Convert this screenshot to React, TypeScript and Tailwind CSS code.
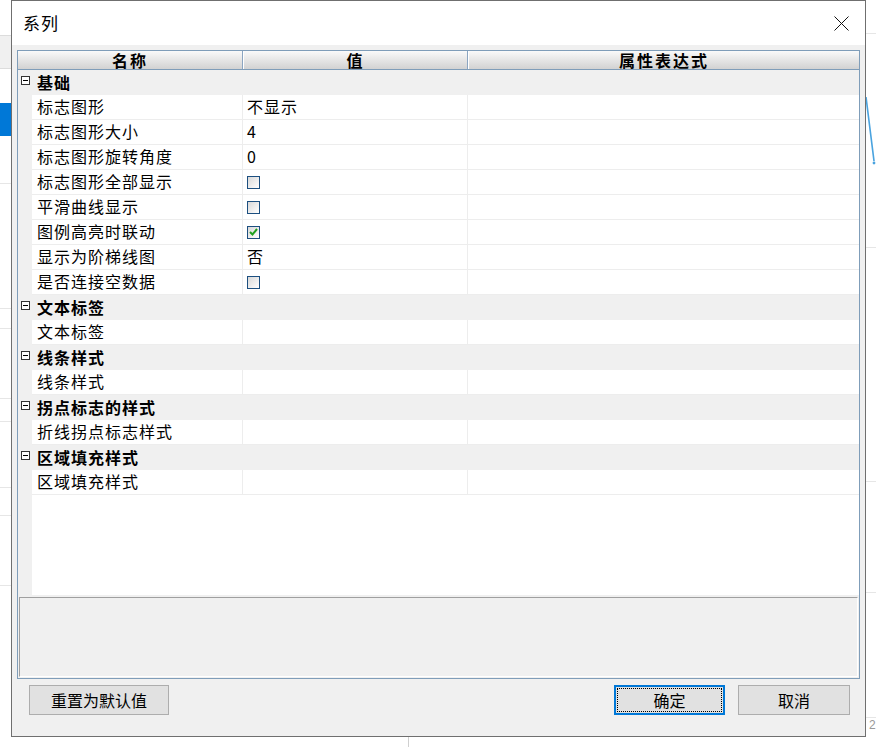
import React from "react";

type Item = { name: string; value?: string; check?: boolean };
type Group = { title: string; items: Item[] };

const groups: Group[] = [
  {
    title: "基础",
    items: [
      { name: "标志图形", value: "不显示" },
      { name: "标志图形大小", value: "4" },
      { name: "标志图形旋转角度", value: "0" },
      { name: "标志图形全部显示", check: false },
      { name: "平滑曲线显示", check: false },
      { name: "图例高亮时联动", check: true },
      { name: "显示为阶梯线图", value: "否" },
      { name: "是否连接空数据", check: false },
    ],
  },
  { title: "文本标签", items: [{ name: "文本标签" }] },
  { title: "线条样式", items: [{ name: "线条样式" }] },
  { title: "拐点标志的样式", items: [{ name: "折线拐点标志样式" }] },
  { title: "区域填充样式", items: [{ name: "区域填充样式" }] },
];

const font = "font-['Noto_Sans_CJK_SC','Noto_Sans',sans-serif]";

const Collapse = () => (
  <svg width="9" height="9" viewBox="0 0 9 9" className="shrink-0">
    <rect x="0.5" y="0.5" width="8" height="8" fill="#fff" stroke="#333" />
    <line x1="2" y1="4.5" x2="7" y2="4.5" stroke="#000" />
  </svg>
);

const CheckBox = ({ checked }: { checked: boolean }) => (
  <div className="w-[13px] h-[13px] border border-[#1c4f80] bg-linear-to-br from-[#d8d8d8] to-white flex items-center justify-center">
    {checked && (
      <svg width="9" height="8" viewBox="0 0 9 8">
        <path d="M1 4 L3.5 6.5 L8 1" fill="none" stroke="#1fa01f" strokeWidth="2" />
      </svg>
    )}
  </div>
);

const HLine = ({ c = "bg-[#dcdcdc]" }: { c?: string }) => <div className={`h-px shrink-0 ${c}`} />;

const LeftStrip = () => (
  <div className="w-[11px] flex flex-col shrink-0">
    <div className="h-[35px]" />
    <HLine />
    <div className="h-[32px] bg-[#f0f0f0]" />
    <HLine />
    <div className="h-[34px]" />
    <div className="h-[33px] bg-[#0078d7]" />
    <div className="h-[47px]" />
    <HLine c="bg-[#e6e6e6]" />
    <div className="h-[124px]" />
    <HLine c="bg-[#e6e6e6]" />
    <div className="h-[19px]" />
    <HLine c="bg-[#e6e6e6]" />
    <div className="h-[69px]" />
    <HLine c="bg-[#e6e6e6]" />
    <div className="h-[22px]" />
    <HLine c="bg-[#e6e6e6]" />
    <div className="h-[65px]" />
    <HLine c="bg-[#e6e6e6]" />
    <div className="h-[27px]" />
    <HLine c="bg-[#e6e6e6]" />
    <div className="h-[69px]" />
    <HLine c="bg-[#e6e6e6]" />
  </div>
);

const RightStrip = () => (
  <div className="flex-1 flex flex-col">
    <div className="h-[33px]" />
    <HLine c="bg-[#e6e6e6]" />
    <div className="h-[63px]" />
    <svg width="10" height="72" viewBox="0 0 10 72" className="shrink-0">
      <path d="M0 0 L8 64" stroke="#4aa3df" strokeWidth="1.6" fill="none" />
      <circle cx="8" cy="66" r="1.4" fill="#4aa3df" />
    </svg>
    <div className="h-[78px]" />
    <HLine c="bg-[#e6e6e6]" />
    <div className="h-[233px]" />
    <HLine c="bg-[#e6e6e6]" />
    <div className="h-[110px]" />
    <HLine c="bg-[#e6e6e6]" />
    <div className="h-[124px]" />
    <HLine c="bg-[#e6e6e6]" />
    <div className="text-[12px] leading-[14px] text-[#999] pl-[3px] font-['Liberation_Sans',sans-serif]">2</div>
  </div>
);

const DataRow = ({ item }: { item: Item }) => (
  <div className="flex h-[25px]">
    <div className="w-[14px] bg-[#f0f0f0] shrink-0" />
    <div className="flex flex-1 border-b border-[#ededed] bg-white">
      <div className="w-[211px] shrink-0 border-r border-[#ededed] pl-[5px] pb-[2px] flex items-center tracking-[1px] text-[16px] leading-[22px] whitespace-nowrap">
        {item.name}
      </div>
      <div className="w-[225px] shrink-0 border-r border-[#ededed] pl-[4px] flex items-center tracking-[1px] text-[16px] leading-[22px]">
        {item.check !== undefined ? (
          <CheckBox checked={item.check} />
        ) : (
          <span className="pb-[2px]">{item.value}</span>
        )}
      </div>
      <div className="flex-1" />
    </div>
  </div>
);

const GroupRow = ({ title }: { title: string }) => (
  <div className="flex h-[25px] bg-[#f0f0f0] items-center">
    <div className="w-[14px] flex justify-center -mt-[4px]">
      <Collapse />
    </div>
    <div className="pl-[5px] pb-[2px] font-bold tracking-[1px] text-[16px] leading-[22px]">{title}</div>
  </div>
);

export default function App() {
  return (
    <div className={`w-[876px] h-[747px] bg-white flex flex-col overflow-hidden text-black ${font}`}>
      <div className="flex h-[737px]">
        <LeftStrip />
        <div className="w-[855px] h-[737px] border border-[#6f6f6f] flex flex-col shrink-0">
          <div className="h-[44px] bg-white flex items-center justify-between pl-[11px] pr-[16px]">
            <span className="text-[17px] tracking-[1px]">系列</span>
            <svg width="15" height="15" viewBox="0 0 15 15">
              <path d="M0.5 0.5 L14.5 14.5 M14.5 0.5 L0.5 14.5" stroke="#111" strokeWidth="1" />
            </svg>
          </div>
          <div className="flex-1 bg-[#f0f0f0] flex flex-col px-[5px] pt-[5px]">
            <div className="h-[629px] border border-[#7f9db9] flex flex-col">
              <div className="flex h-[19px] border-b border-[#7f9db9] bg-linear-to-b from-[#fafafa] to-[#d2d2d2]">
                <div className="w-[225px] border-r border-[#8ba5c1] text-center font-bold text-[16px] leading-[18px] tracking-[2px]">
                  名称
                </div>
                <div className="w-[225px] border-r border-[#8ba5c1] border-l border-l-white text-center font-bold text-[16px] leading-[18px] tracking-[2px]">
                  值
                </div>
                <div className="flex-1 border-l border-l-white text-center font-bold text-[16px] leading-[18px] tracking-[2px]">
                  属性表达式
                </div>
              </div>
              <div className="flex-1 flex flex-col">
                {groups.map((g) => (
                  <React.Fragment key={g.title}>
                    <GroupRow title={g.title} />
                    {g.items.map((it) => (
                      <DataRow key={it.name} item={it} />
                    ))}
                  </React.Fragment>
                ))}
                <div className="flex-1 flex">
                  <div className="w-[14px] bg-[#f0f0f0]" />
                  <div className="flex-1 bg-white" />
                </div>
              </div>
              <div className="h-[83px] px-px pt-[2px] pb-px flex">
                <div className="flex-1 border-t border-l border-[#a0a0a0] border-b border-r border-b-white border-r-white bg-[#f0f0f0]" />
              </div>
            </div>
            <div className="flex items-center mt-[6px] h-[30px] pl-[12px] pr-[10px] text-[16px]">
              <button className="w-[140px] h-[30px] bg-[#e1e1e1] border border-[#adadad]">重置为默认值</button>
              <div className="flex-1" />
              <button className="w-[111px] h-[30px] bg-[#e1e1e1] border-2 border-[#0078d7] p-px">
                <div className="w-full h-full border border-dotted border-black flex items-center justify-center">
                  确定
                </div>
              </button>
              <button className="w-[112px] h-[30px] ml-[13px] bg-[#e1e1e1] border border-[#adadad]">取消</button>
            </div>
          </div>
        </div>
        <RightStrip />
      </div>
      <div className="flex-1 flex">
        <div className="w-[408px]" />
        <div className="w-px bg-[#d0d0d0]" />
      </div>
    </div>
  );
}
